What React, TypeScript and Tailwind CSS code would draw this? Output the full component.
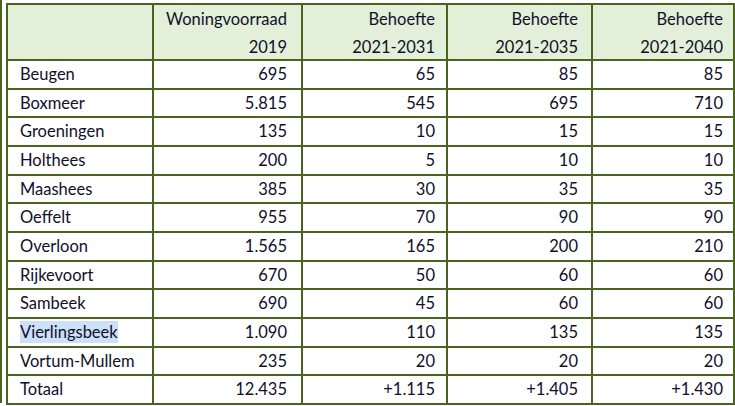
import React from "react";

const rows: [string, string, string, string, string][] = [
  ["Beugen", "695", "65", "85", "85"],
  ["Boxmeer", "5.815", "545", "695", "710"],
  ["Groeningen", "135", "10", "15", "15"],
  ["Holthees", "200", "5", "10", "10"],
  ["Maashees", "385", "30", "35", "35"],
  ["Oeffelt", "955", "70", "90", "90"],
  ["Overloon", "1.565", "165", "200", "210"],
  ["Rijkevoort", "670", "50", "60", "60"],
  ["Sambeek", "690", "45", "60", "60"],
  ["Vierlingsbeek", "1.090", "110", "135", "135"],
  ["Vortum-Mullem", "235", "20", "20", "20"],
  ["Totaal", "12.435", "+1.115", "+1.405", "+1.430"],
];

const pr = ["pr-[14px]", "pr-[11px]", "pr-[13px]", "pr-[10px]"];

export default function App() {
  return (
    <div
      className="flex w-[735px] h-[406px] bg-white overflow-hidden text-[#10102a] text-[16.5px]"
      style={{ fontFamily: "Lato, 'Open Sans', sans-serif" }}
    >
      <div className="w-[2px] h-[403px] bg-[#4a6420] shrink-0" />
      <div className="ml-[4px] mt-[3px] w-[729px] h-[402px] bg-[#4a6420] p-[2px] grid grid-cols-[144px_147px_143px_143px_140px] grid-rows-[54px_repeat(12,1fr)] gap-[2px]">
        <div className="bg-[#e2efd9]" />
        {[
          ["Woningvoorraad", "2019"],
          ["Behoefte", "2021-2031"],
          ["Behoefte", "2021-2035"],
          ["Behoefte", "2021-2040"],
        ].map((h, i) => (
          <div key={i} className={`bg-[#e2efd9] text-right leading-[28px] ${pr[i]}`}>
            <div>{h[0]}</div>
            <div>{h[1]}</div>
          </div>
        ))}
        {rows.map((r) => (
          <React.Fragment key={r[0]}>
            <div className="bg-white flex items-center pl-[12px]">
              {r[0] === "Vierlingsbeek" ? (
                <span className="bg-[#cce0f7] leading-[22px]">{r[0]}</span>
              ) : (
                r[0]
              )}
            </div>
            {r.slice(1).map((v, i) => (
              <div key={i} className={`bg-white flex items-center justify-end ${pr[i]}`}>
                {v}
              </div>
            ))}
          </React.Fragment>
        ))}
      </div>
    </div>
  );
}
